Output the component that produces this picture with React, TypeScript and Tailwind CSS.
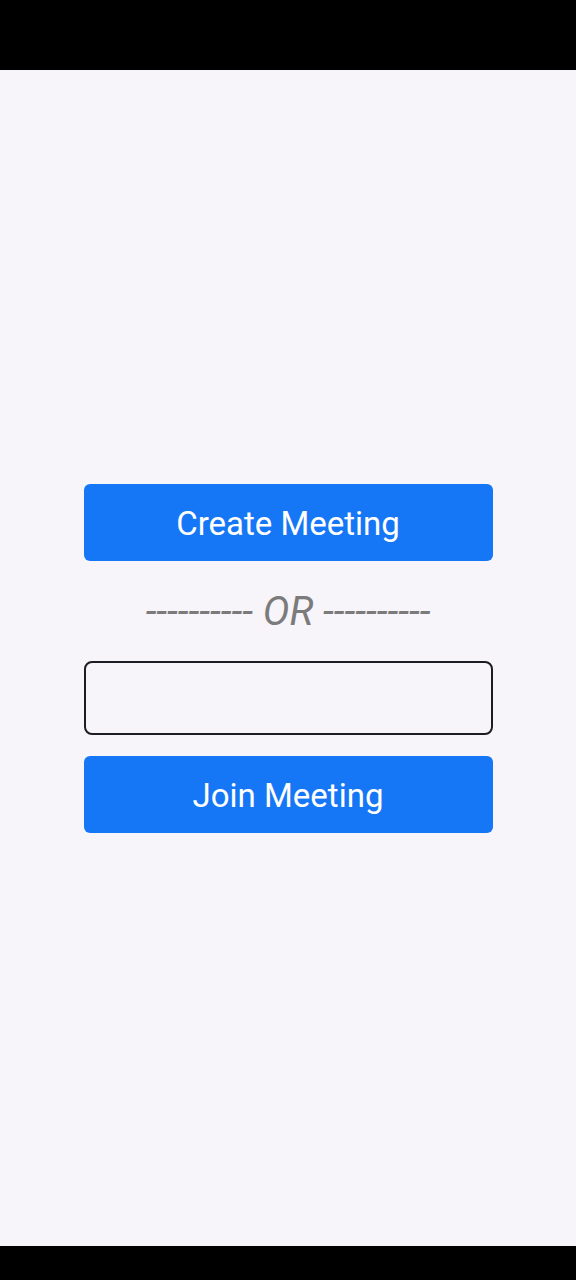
export default function App() {
  return (
    <div className="flex h-[1280px] w-[576px] flex-col bg-black" style={{ fontFamily: "Roboto, 'Noto Sans', sans-serif" }}>
      <div className="h-[70px] shrink-0 bg-black" />
      <div className="flex flex-1 flex-col items-center justify-center bg-[#f7f5fa]">
        <div className="flex w-[409px] flex-col">
          <button className="flex h-[77px] items-center justify-center rounded-[6px] bg-[#1677f6] pt-[4px] text-[33px] text-white">
            Create Meeting
          </button>
          <div className="mt-[26px] mb-[24px] text-center text-[40px] italic leading-[50px] text-[#7b7b7b]">
            ---------- OR ----------
          </div>
          <input
            className="h-[74px] w-full rounded-[8px] border-[2px] border-[#1c1c24] bg-transparent px-4 text-[24px] outline-none"
            type="text"
          />
          <button className="mt-[21px] flex h-[77px] items-center justify-center rounded-[6px] bg-[#1677f6] pt-[4px] text-[33px] text-white">
            Join Meeting
          </button>
        </div>
      </div>
      <div className="h-[34px] shrink-0 bg-black" />
    </div>
  )
}
